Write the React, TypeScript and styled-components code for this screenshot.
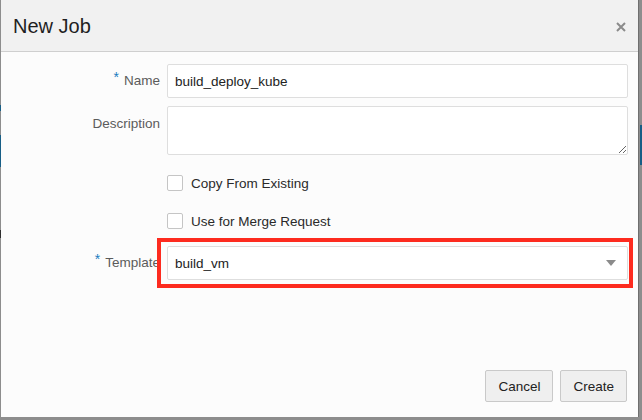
import React from "react";
import styled, { createGlobalStyle } from "styled-components";

const GlobalStyle = createGlobalStyle`
  html, body { margin: 0; padding: 0; }
  body {
    background: #8d8d8d;
    font-family: "Liberation Sans", Arial, Helvetica, sans-serif;
    width: 642px;
    height: 420px;
    overflow: hidden;
  }
  * { box-sizing: border-box; }
`;

const Backdrop = styled.div`
  width: 642px;
  height: 420px;
  display: flex;
  align-items: flex-start;
  padding-left: 1px;
  background-color: #8d8d8d;
  background-image:
    linear-gradient(#175e86, #175e86),
    linear-gradient(#175e86, #175e86),
    linear-gradient(#2f2f2f, #2f2f2f),
    linear-gradient(#175e86, #175e86);
  background-size: 1px 32px, 1px 6px, 1px 8px, 2px 40px;
  background-position: 0 135px, 0 105px, 0 230px, 640px 125px;
  background-repeat: no-repeat;
`;

const Dialog = styled.div`
  width: 638px;
  height: 417px;
  background: #fcfcfc;
  display: flex;
  flex-direction: column;
  border-right: 1px solid #6f6f6f;
`;

const Header = styled.div`
  height: 52px;
  flex: none;
  background: #f1f1f1;
  border-bottom: 1px solid #cfcfcf;
  display: flex;
  align-items: center;
  justify-content: space-between;
  padding: 0 10px 0 12px;
`;

const Title = styled.h1`
  margin: 0;
  font-size: 20px;
  font-weight: 400;
  color: #1f1f1f;
  padding-top: 2px;
`;

const CloseButton = styled.button`
  border: 0;
  background: transparent;
  padding: 0;
  width: 14px;
  height: 14px;
  display: flex;
  align-items: center;
  justify-content: center;
  cursor: pointer;
  margin-top: 3px;
`;

const Body = styled.div`
  flex: 1;
  display: grid;
  grid-template-columns: 159px 461px;
  column-gap: 7px;
  align-content: start;
  padding-top: 12px;
`;

const Label = styled.label<{ $pt: number }>`
  justify-self: end;
  align-self: start;
  font-size: 13.5px;
  line-height: 16px;
  color: #5b5b5b;
  white-space: nowrap;
  padding-top: ${(p) => p.$pt}px;
`;

const Req = styled.span`
  color: #1b7cc0;
  font-size: 14px;
  line-height: 0;
  margin-right: 5px;
  vertical-align: 3px;
`;

const Cell = styled.div<{ $mb?: number }>`
  position: relative;
  margin-bottom: ${(p) => p.$mb ?? 0}px;
`;

const TextInput = styled.input`
  width: 100%;
  height: 34px;
  border: 1px solid #dedede;
  border-radius: 2px;
  background: #fff;
  padding: 0 7px;
  font-family: inherit;
  font-size: 13.5px;
  color: #222;
  outline: none;
`;

const TextArea = styled.textarea`
  display: block;
  width: 100%;
  height: 49px;
  border: 1px solid #dedede;
  border-radius: 2px;
  background: #fff;
  font-family: inherit;
  font-size: 13.5px;
  outline: none;
  resize: both;
`;

const CheckRow = styled.label`
  display: flex;
  align-items: center;
  gap: 8px;
  height: 16px;
  font-size: 13.5px;
  color: #2a2a2a;
`;

const CheckBox = styled.span`
  width: 16px;
  height: 16px;
  border: 1px solid #c5c5c5;
  border-radius: 2px;
  background: #fff;
  flex: none;
`;

const Select = styled.div`
  height: 34px;
  border: 1px solid #dedede;
  border-radius: 2px;
  background: #fff;
  display: flex;
  align-items: center;
  justify-content: space-between;
  padding: 0 11px 0 7px;
  font-size: 13.5px;
  color: #222;
`;

const Highlight = styled.div`
  position: absolute;
  left: -10px;
  right: -5px;
  top: -8px;
  bottom: -8px;
  border: 4px solid #fd2b1f;
  pointer-events: none;
`;

const Footer = styled.div`
  display: flex;
  justify-content: flex-end;
  gap: 7px;
  padding: 0 11px 15px 0;
`;

const Button = styled.button`
  height: 32px;
  padding: 0 12px;
  background: #efefef;
  border: 1px solid #c9c9c9;
  border-radius: 2px;
  font-family: inherit;
  font-size: 13.5px;
  color: #222;
`;

const Spacer = styled.div``;

export default function App() {
  return (
    <>
      <GlobalStyle />
      <Backdrop>
        <Dialog>
          <Header>
            <Title>New Job</Title>
            <CloseButton aria-label="Close">
              <svg width="10" height="10" viewBox="0 0 10 10">
                <path d="M1 1 L9 9 M9 1 L1 9" stroke="#8b8b8b" strokeWidth="2" />
              </svg>
            </CloseButton>
          </Header>
          <Body>
            <Label $pt={9}>
              <Req>*</Req>Name
            </Label>
            <Cell $mb={8}>
              <TextInput defaultValue="build_deploy_kube" />
            </Cell>

            <Label $pt={10}>Description</Label>
            <Cell $mb={20}>
              <TextArea />
            </Cell>

            <Spacer />
            <Cell $mb={22}>
              <CheckRow>
                <CheckBox />
                Copy From Existing
              </CheckRow>
            </Cell>

            <Spacer />
            <Cell $mb={17}>
              <CheckRow>
                <CheckBox />
                Use for Merge Request
              </CheckRow>
            </Cell>

            <Label $pt={9}>
              <Req>*</Req>Template
            </Label>
            <Cell>
              <Select>
                <span>build_vm</span>
                <svg width="10" height="6" viewBox="0 0 10 6">
                  <path d="M0 0 H10 L5 6 Z" fill="#8b8b8b" />
                </svg>
              </Select>
              <Highlight />
            </Cell>
          </Body>
          <Footer>
            <Button>Cancel</Button>
            <Button>Create</Button>
          </Footer>
        </Dialog>
      </Backdrop>
    </>
  );
}
